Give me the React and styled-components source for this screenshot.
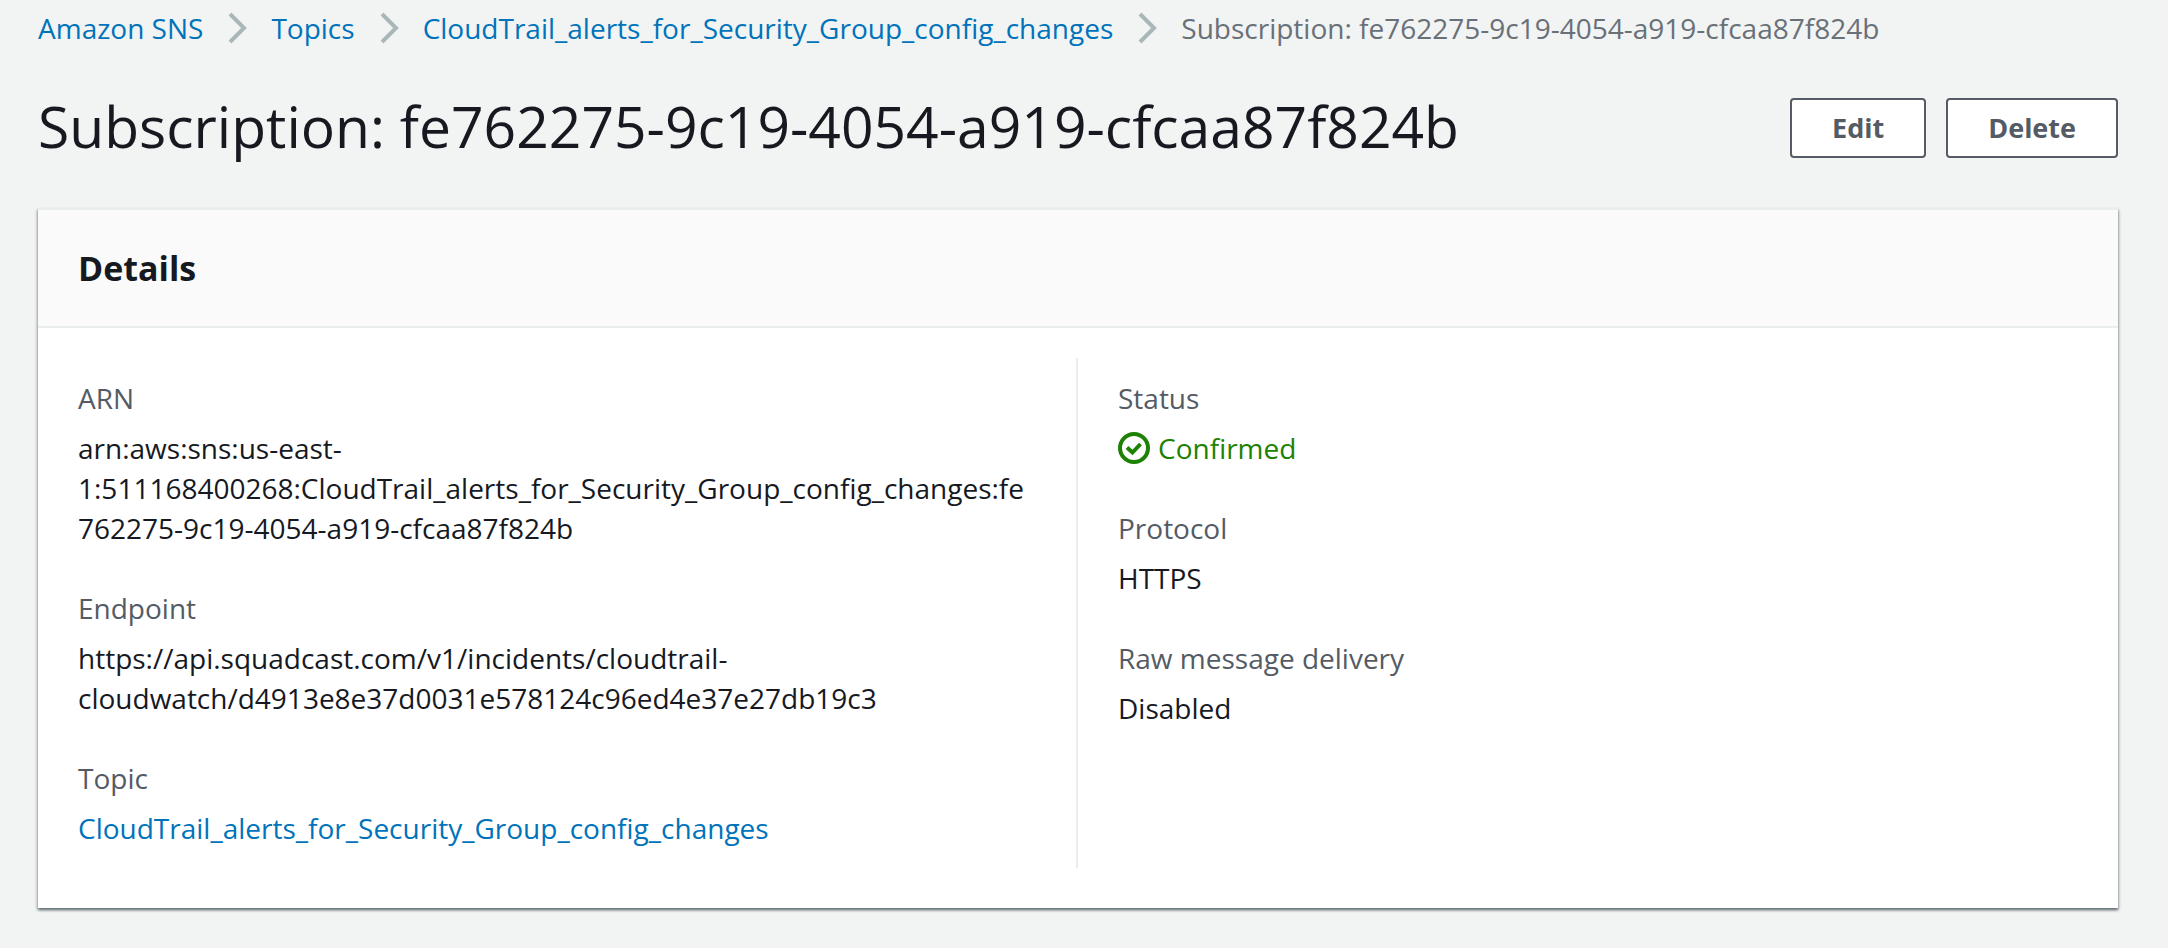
import React from 'react';
import styled, { createGlobalStyle } from 'styled-components';

const GlobalStyle = createGlobalStyle`
  *, *::before, *::after { box-sizing: border-box; }
  body {
    margin: 0;
    background: #f2f3f3;
    color: #16191f;
    font-family: "Open Sans", "Noto Sans", sans-serif;
    font-size: 28px;
    line-height: 40px;
  }
`;

const Page = styled.main`
  padding: 8px 50px 40px 38px;
`;

const BreadcrumbList = styled.ol`
  display: flex;
  align-items: center;
  margin: 0;
  padding: 0;
  list-style: none;
`;

const BreadcrumbItem = styled.li`
  display: flex;
  align-items: center;
  color: #687078;
  white-space: nowrap;
`;

const Link = styled.a`
  color: #0073bb;
  text-decoration: none;
  &:hover { text-decoration: underline; }
`;

const ChevronIcon = styled.svg`
  width: 20px;
  height: 32px;
  margin: 0 24px;
  fill: none;
  stroke: #aab7b8;
  stroke-width: 4;
`;

const TitleBar = styled.header`
  display: flex;
  align-items: center;
  justify-content: space-between;
  gap: 20px;
  margin: 44px 0;
`;

const Title = styled.h1`
  margin: 0;
  padding-bottom: 4px;
  font-size: 57px;
  font-weight: 400;
  line-height: 68px;
`;

const Actions = styled.div`
  display: flex;
  gap: 20px;
`;

const Button = styled.button`
  padding: 8px 40px;
  border: 2px solid #545b64;
  border-radius: 4px;
  background: #fff;
  color: #545b64;
  font-family: inherit;
  font-size: 27px;
  font-weight: 700;
  line-height: 40px;
  cursor: pointer;
`;

const Panel = styled.section`
  border-top: 2px solid #eaeded;
  background: #fff;
  box-shadow: 0 2px 2px 0 rgba(0, 28, 36, 0.3), 1px 2px 3px 0 rgba(0, 28, 36, 0.25),
    -1px 2px 3px 0 rgba(0, 28, 36, 0.25);
`;

const PanelHeader = styled.header`
  padding: 36px 40px;
  border-bottom: 2px solid #eaeded;
  background: #fafafa;
`;

const PanelTitle = styled.h2`
  margin: 0;
  font-size: 34px;
  font-weight: 700;
  line-height: 44px;
`;

const Columns = styled.div`
  display: grid;
  grid-template-columns: 1fr 1fr;
  padding: 30px 0 40px;
`;

const Column = styled.dl`
  display: flex;
  flex-direction: column;
  gap: 40px;
  min-width: 0;
  margin: 0;
  padding: 20px 40px;

  &:not(:last-child) {
    padding-right: 38px;
    border-right: 2px solid #eaeded;
  }
`;

const Field = styled.div`
  display: flex;
  flex-direction: column;
  gap: 10px;
`;

const Label = styled.dt`
  color: #545b64;
`;

const Value = styled.dd`
  margin: 0;
  overflow-wrap: anywhere;
`;

const Status = styled.span`
  display: flex;
  align-items: center;
  gap: 8px;
  color: #1d8102;
`;

const StatusIcon = styled.svg`
  width: 32px;
  height: 32px;
  fill: none;
  stroke: currentColor;
  stroke-width: 4;
`;

const SUBSCRIPTION_ID = 'fe762275-9c19-4054-a919-cfcaa87f824b';
const SUBSCRIPTION = `Subscription: ${SUBSCRIPTION_ID}`;
const TOPIC = 'CloudTrail_alerts_for_Security_Group_config_changes';
const ARN = `arn:aws:sns:us-east-1:511168400268:${TOPIC}:${SUBSCRIPTION_ID}`;
const ENDPOINT =
  'https://api.squadcast.com/v1/incidents/cloudtrail-cloudwatch/d4913e8e37d0031e578124c96ed4e37e27db19c3';

function Crumb({ children, last }) {
  if (last) return <BreadcrumbItem aria-current="page">{children}</BreadcrumbItem>;
  return (
    <BreadcrumbItem>
      <Link href="#">{children}</Link>
      <ChevronIcon viewBox="0 0 20 32" aria-hidden="true">
        <path d="M3 2 17 16 3 30" />
      </ChevronIcon>
    </BreadcrumbItem>
  );
}

function Detail({ label, children }) {
  return (
    <Field>
      <Label>{label}</Label>
      <Value>{children}</Value>
    </Field>
  );
}

export default function App() {
  return (
    <>
      <GlobalStyle />
      <Page>
        <nav aria-label="Breadcrumbs">
          <BreadcrumbList>
            <Crumb>Amazon SNS</Crumb>
            <Crumb>Topics</Crumb>
            <Crumb>{TOPIC}</Crumb>
            <Crumb last>{SUBSCRIPTION}</Crumb>
          </BreadcrumbList>
        </nav>
        <TitleBar>
          <Title>{SUBSCRIPTION}</Title>
          <Actions>
            <Button type="button">Edit</Button>
            <Button type="button">Delete</Button>
          </Actions>
        </TitleBar>
        <Panel>
          <PanelHeader>
            <PanelTitle>Details</PanelTitle>
          </PanelHeader>
          <Columns>
            <Column>
              <Detail label="ARN">{ARN}</Detail>
              <Detail label="Endpoint">{ENDPOINT}</Detail>
              <Detail label="Topic">
                <Link href="#">{TOPIC}</Link>
              </Detail>
            </Column>
            <Column>
              <Detail label="Status">
                <Status>
                  <StatusIcon viewBox="0 0 32 32" aria-hidden="true">
                    <circle cx="16" cy="16" r="14" />
                    <path d="M9 15.5 14.5 20.5 22.5 12" />
                  </StatusIcon>
                  Confirmed
                </Status>
              </Detail>
              <Detail label="Protocol">HTTPS</Detail>
              <Detail label="Raw message delivery">Disabled</Detail>
            </Column>
          </Columns>
        </Panel>
      </Page>
    </>
  );
}
